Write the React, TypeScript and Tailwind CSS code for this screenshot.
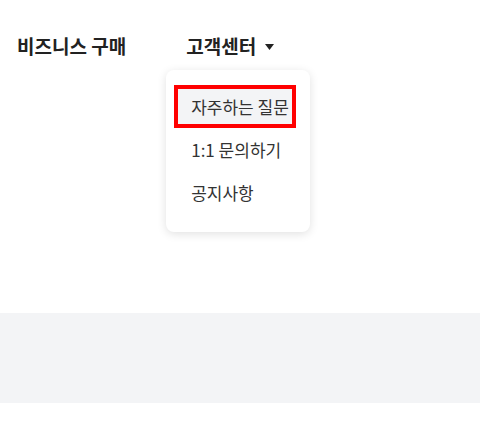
const FONT = "font-['Noto_Sans_CJK_KR','Noto_Sans',sans-serif]";

const menuItems = ["자주하는 질문", "1:1 문의하기", "공지사항"];

function SupportMenu() {
  return (
    <div className="absolute left-[-20px] top-[36px] w-[144px] rounded-lg bg-white pt-[15px] pb-[18px] pl-[8px] font-normal shadow-[0_2px_10px_rgba(0,0,0,0.12)]">
      <ul className="flex flex-col">
        {menuItems.map((label, i) => (
          <li key={label}>
            <a
              href="#"
              className={
                i === 0
                  ? "flex h-[43px] w-[122px] items-center border-4 border-[#ff0000] bg-[#f3f4f6] pl-[13px] text-[17px] font-normal text-[#333333]"
                  : "flex h-[43px] w-[122px] items-center pl-[17px] text-[17px] font-normal text-[#333333]"
              }
            >
              {label}
            </a>
          </li>
        ))}
      </ul>
    </div>
  );
}

export default function App() {
  return (
    <div className={`min-h-[428px] w-full bg-white ${FONT}`}>
      <header className="h-[313px] pt-[34px] pl-[17px]">
        <nav className="flex items-center gap-[60px] text-[19px] leading-[24px] font-bold text-[#222222]">
          <a href="#">비즈니스 구매</a>
          <div className="relative">
            <button type="button" className="flex items-center gap-[9px] font-bold">
              고객센터
              <svg width="9" height="6" viewBox="0 0 9 6" className="mt-[1px]">
                <path d="M0 0h9L4.5 6z" fill="#222222" />
              </svg>
            </button>
            <SupportMenu />
          </div>
        </nav>
      </header>
      <section className="h-[90px] bg-[#f3f4f6]" />
    </div>
  );
}
